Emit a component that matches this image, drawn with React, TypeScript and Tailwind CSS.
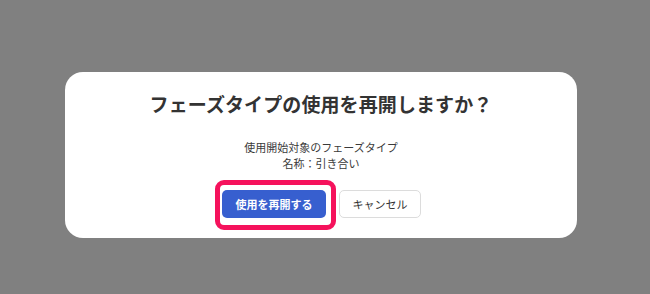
export default function App() {
  return (
    <div
      className="w-[650px] h-[294px] bg-[#808080] pt-[72px] pl-[65px] overflow-hidden"
      style={{ fontFamily: '"Noto Sans CJK JP", "Noto Sans", sans-serif' }}
    >
      <div className="w-[512px] h-[166px] bg-white rounded-[18px] flex flex-col items-center pt-[18px]">
        <h2 className="text-[19px] leading-[28px] font-bold text-[#333] tracking-[0.1px]">フェーズタイプの使用を再開しますか？</h2>

        <div className="mt-[21px] text-[11px] leading-[16px] text-[#3a3a3a] text-center font-normal">
          <p>使用開始対象のフェーズタイプ</p>
          <p>名称：引き合い</p>
        </div>

        <div className="mt-[19px] flex items-center gap-[13px] pl-[1px]">
          <div className="relative">
            <button
              type="button"
              className="w-[104px] h-[28px] rounded-[5px] bg-[#375fcf] text-white text-[11px] font-bold"
            >
              使用を再開する
            </button>
            <div className="absolute -left-[7px] -top-[10px] w-[121px] h-[50px] rounded-[9px] border-[5px] border-[#f5125c] pointer-events-none" />
          </div>
          <button
            type="button"
            className="w-[82px] h-[28px] rounded-[5px] border border-[#dcdcdc] bg-white text-[#333] text-[11px] font-normal"
          >
            キャンセル
          </button>
        </div>
      </div>
    </div>
  );
}
